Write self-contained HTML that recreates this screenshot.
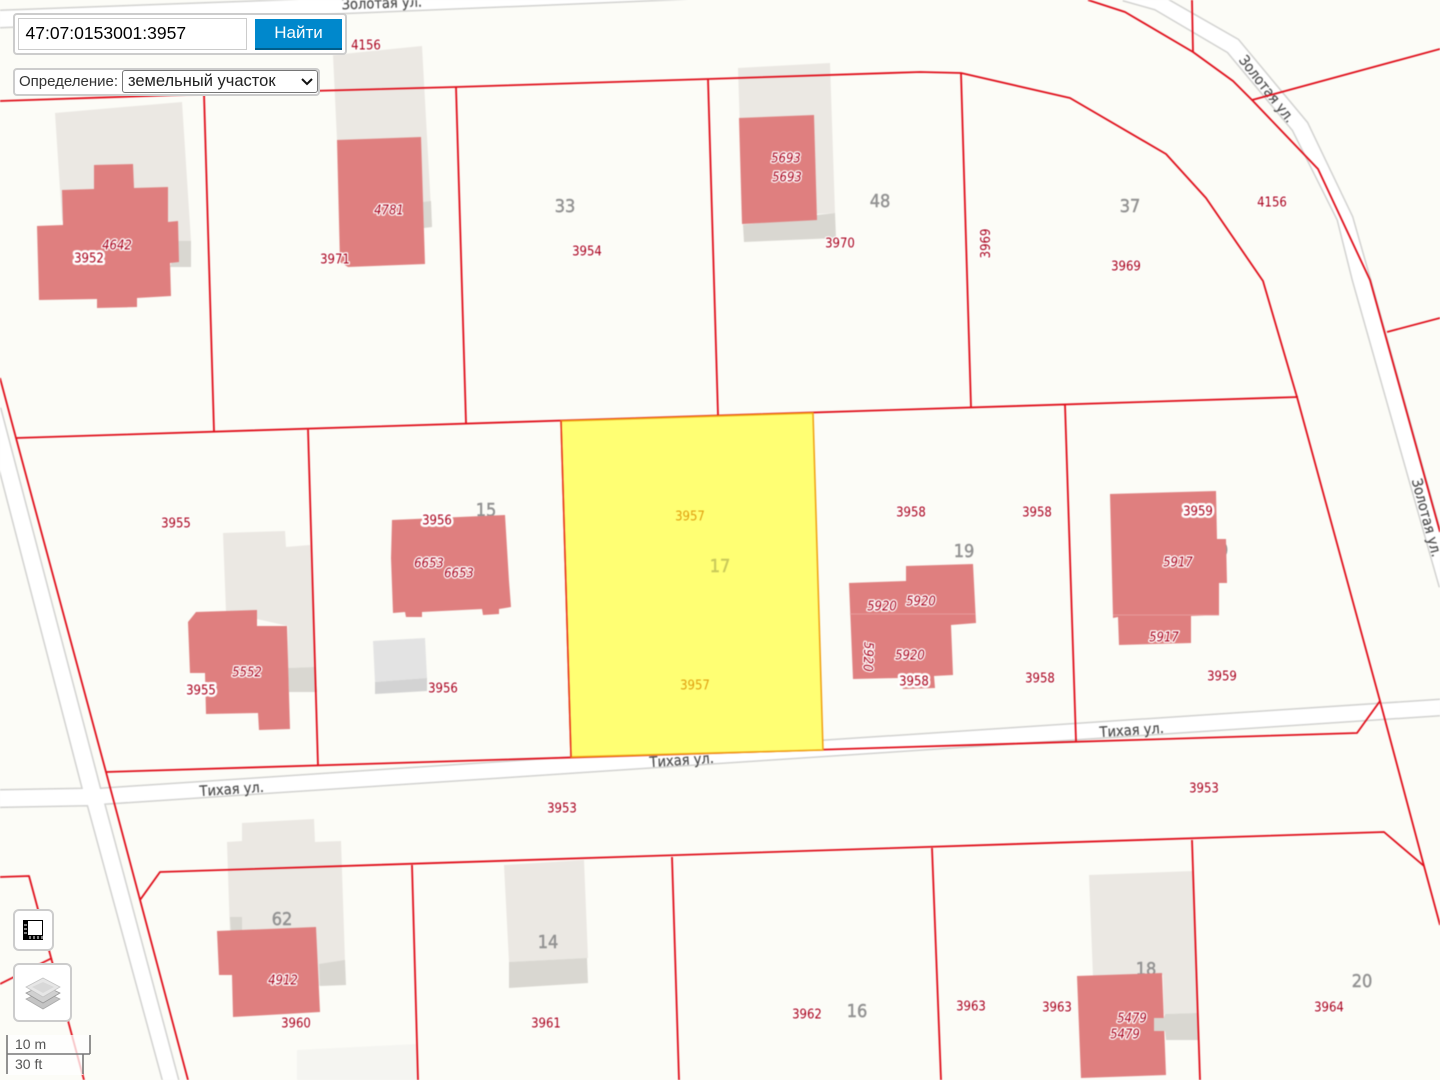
<!DOCTYPE html>
<html lang="ru"><head><meta charset="utf-8"><title>Карта</title>
<style>
html,body{margin:0;padding:0;width:1440px;height:1080px;overflow:hidden;background:#fcfcf7;font-family:"Liberation Sans",sans-serif}
svg.map{position:absolute;left:0;top:0;filter:blur(.45px)}
.ui{position:absolute;left:0;top:0;width:1440px;height:1080px;filter:blur(.3px)}
.n{font:13px "DejaVu Sans Condensed","DejaVu Sans",sans-serif;font-stretch:condensed;fill:#a8001a;text-anchor:middle;paint-order:stroke;stroke:#fff;stroke-width:2.5px;stroke-linejoin:round}
.i{font-style:italic}
.h{stroke-width:5px}
.g{font:18px "DejaVu Sans Condensed","DejaVu Sans",sans-serif;font-stretch:condensed;fill:#929292;stroke:#929292;stroke-width:.45px;text-anchor:middle}
.s{font:14.5px "DejaVu Sans Condensed","DejaVu Sans",sans-serif;font-stretch:condensed;fill:#4c4c4c;stroke:#4c4c4c;stroke-width:.2px;text-anchor:middle}
.panel{position:absolute;box-sizing:border-box;background:#fff;border:2px solid #ccc;border-radius:4px}
.inp{position:absolute;box-sizing:border-box;left:18px;top:18px;width:229px;height:32px;background:#fff;border:1px solid #ccc;font-size:17.5px;line-height:29px;padding-left:6.5px;color:#000}
.btn{position:absolute;box-sizing:border-box;left:255px;top:19px;width:87px;height:31px;background:#0088cc;border-bottom:2px solid #005e8c;color:#fff;font-size:17px;line-height:28px;text-align:center}
.lbl{position:absolute;left:19px;top:72px;font-size:15px;line-height:20px;color:#333}
.sel{position:absolute;box-sizing:border-box;left:122px;top:70px;width:196px;height:23px;background:#fff;border:1px solid #767676;border-radius:3px;font-size:16.5px;line-height:21px;padding-left:5px;color:#222}
.tb{position:absolute;box-sizing:border-box;background:#fff;border:2px solid #ccc;border-radius:6px}
.sc{position:absolute;font-size:14px;line-height:16px;color:#555}
</style></head><body>
<svg class="map" width="1440" height="1080" viewBox="0 0 1440 1080">
<rect width="1440" height="1080" fill="#fcfcf7"/>
<!-- roads -->
<g id="roads" fill="#d2d2d0" stroke="#d2d2d0" stroke-width="3">
<polygon points="0,11 300,0 700,-2 340,13 0,27"/>
<polygon points="1123,0 1155,9 1228,52 1293,130 1338,220 1353,280 1440,587 1440,532 1370,280 1352,217 1307,123 1238,40 1168,0"/>
<polygon points="0,408 100,789 1440,700 1440,715 104,803.5 178,1080 163,1080 88,805 0,806.6 0,790.5 83,789 0,470"/>
</g>
<g fill="#fff">
<polygon points="0,11 300,0 700,-2 340,13 0,27"/>
<polygon points="1123,0 1155,9 1228,52 1293,130 1338,220 1353,280 1440,587 1440,532 1370,280 1352,217 1307,123 1238,40 1168,0"/>
<polygon points="0,408 100,789 1440,700 1440,715 104,803.5 178,1080 163,1080 88,805 0,806.6 0,790.5 83,789 0,470"/>
</g>
<!-- gray buildings -->
<g fill="#ebe8e3">
<polygon points="55,113 182,102 191,241 178,241 100,270 62,220"/>
<polygon points="333,55 422,46 432,227 420,228 420,140 337,140"/>
<polygon points="738,68 830,63 835,213 817,214 743,227"/>
<polygon points="223,533 285,531 286,547 310,545 315,667 288,668 288,626 226,612"/>
<polygon points="242,823 314,819 315,842 341,841 345,961 318,987 316,930 230,935 227,842 242,841"/>
<polygon points="504,865 584,860 588,958 509,962"/>
<polygon points="1089,875 1193,871 1197,1013 1164,1014 1163,975 1093,977"/>
</g>
<g fill="#d9d7d1">
<polygon points="178,241 191,241 191,267 170,267"/>
<polygon points="423,202 431,201 432,227 424,228"/>
<polygon points="743,225 817,215 835,213 836,238 744,242"/>
<polygon points="288,668 315,667 317,692 289,692"/>
<polygon points="319,964 345,960 346,985 320,986"/>
<polygon points="230,917 242,917 242,932 231,932"/>
<polygon points="509,962 587,958 588,983 509,988"/>
</g>
<polygon points="297,1050 417,1044 418,1080 297,1080" fill="#f5f5f1"/>
<polygon points="373,641 425,638 427,678 375,682" fill="#e3e3e3"/>
<polygon points="375,682 427,678 427,691 375,694" fill="#d3d3d3"/>
<!-- gray numbers / street names -->
<g class="gg">
<text class="g" x="565" y="212">33</text>
<text class="g" x="880" y="207">48</text>
<text class="g" x="1130" y="212">37</text>
<text class="g" x="486" y="516">15</text>
<text class="g" x="964" y="557">19</text>
<text class="g" x="282" y="925">62</text>
<text class="g" x="548" y="948">14</text>
<text class="g" x="1146" y="975">18</text>
<text class="g" x="857" y="1017">16</text>
<text class="g" x="1362" y="987">20</text>
<text class="g" x="1223" y="556">0</text>
</g>
<text class="s" transform="translate(382,8) rotate(-2)">Золотая ул.</text>
<text class="s" transform="translate(232,794) rotate(-3.8)">Тихая ул.</text>
<text class="s" transform="translate(682,765) rotate(-3.8)">Тихая ул.</text>
<text class="s" transform="translate(1132,735) rotate(-3.8)">Тихая ул.</text>
<text class="s" transform="translate(1263,92) rotate(52)">Золотая ул.</text>
<text class="s" transform="translate(1422,519) rotate(75)">Золотая ул.</text>
<!-- red buildings -->
<g fill="#df7f7f">
<polygon points="94,165 133,164 134,188 168,187 168,222 178,221 179,262 170,263 171,296 137,298 137,307 97,308 97,299 39,300 37,226 63,225 62,190 94,189"/>
<polygon points="337,140 421,137 425,264 348,267 340,262"/>
<polygon points="739,118 814,115 817,220 742,224"/>
<polygon points="196,612 257,610 257,626 287,626 290,729 259,730 258,713 206,714 205,673 190,673 188,622"/>
<polygon points="392,520 505,515 509,581 511,607 499,609 499,614 483,615 482,609 422,612 422,617 406,617 405,612 393,613 391,558"/>
<polygon points="849,583 906,581 906,566 973,564 976,623 951,625 953,675 934,676 935,688 903,689 899,678 853,679"/>
<polygon points="1110,494 1216,491 1217,539 1226,539 1227,583 1219,583 1219,615 1191,616 1191,643 1119,645 1118,617 1113,618"/>
<polygon points="217,931 316,927 320,1012 233,1017 232,975 219,975"/>
<polygon points="1077,976 1162,973 1166,1075 1081,1078"/>
</g>
<polygon points="1165,1014 1197,1013 1198,1040 1166,1040 1165,1031 1154,1031 1154,1018 1164,1018" fill="#d9d7d1"/>
<path d="M850,614H975M1113,615H1219" stroke="#e89a9a" stroke-width="1" fill="none"/>
<!-- red cadastral lines -->
<g fill="none" stroke="#e0101c" stroke-width="1.8" stroke-linejoin="round">
<path d="M0,101L204,94L456,87L708,79L920,72L961,73L1070,98L1166,154L1206,198L1263,281L1297,397"/>
<path d="M204,94L214,431M456,87L466,423M708,79L718,415M961,73L971,407"/>
<path d="M16,438L1298,397M308,429L318,766M1065,405L1076,741"/>
<path d="M0,378L16,438L106,772L188,1080"/>
<path d="M106,772L1357,733L1380,701L1297,397"/>
<path d="M1380,701L1424,866L1440,925"/>
<path d="M140,900L160,872L1384,832L1424,866"/>
<path d="M412,865L418,1080M672,857L679,1080M932,848L941,1080M1192,840L1200,1080"/>
<path d="M1088,0L1125,12L1193,52L1233,81L1252,100L1318,169L1370,280L1440,532"/>
<path d="M1192,0L1193,52M1252,100L1440,49M1387,332L1440,318"/>
<path d="M0,877L29,876L84,1080M0,984L52,958"/>
</g>
<!-- selected parcel -->
<polygon points="561,421 813,413 823,750 571,757" fill="#ffff73" stroke="#f0a010" stroke-width="1.5"/>
<path d="M561,421L571,757" stroke="#e8301f" stroke-width="1.5" fill="none"/>
<text class="g" x="720" y="572" style="fill:#c9c95a;stroke:#c9c95a">17</text>
<g transform="translate(0,.5)">
<text class="n" x="690" y="520" style="fill:#e0a010;stroke:none">3957</text>
<text class="n" x="695" y="689" style="fill:#e0a010;stroke:none">3957</text>
<!-- labels -->
<text class="n" x="366" y="49">4156</text>
<text class="n h" x="89" y="262">3952</text>
<text class="n i" x="117" y="249">4642</text>
<text class="n" x="335" y="263">3971</text>
<text class="n i" x="389" y="214">4781</text>
<text class="n i" x="786" y="162">5693</text>
<text class="n i" x="787" y="181">5693</text>
<text class="n" x="587" y="255">3954</text>
<text class="n" x="840" y="247">3970</text>
<text class="n" transform="translate(990,243) rotate(-90)">3969</text>
<text class="n" x="1126" y="270">3969</text>
<text class="n" x="1272" y="206">4156</text>
<text class="n" x="176" y="527">3955</text>
<text class="n h" x="201" y="694">3955</text>
<text class="n i" x="247" y="676">5552</text>
<text class="n h" x="437" y="524">3956</text>
<text class="n i" x="429" y="567">6653</text>
<text class="n i" x="459" y="577">6653</text>
<text class="n" x="443" y="692">3956</text>
<text class="n" x="911" y="516">3958</text>
<text class="n" x="1037" y="516">3958</text>
<text class="n i" x="882" y="610">5920</text>
<text class="n i" x="921" y="605">5920</text>
<text class="n i" x="910" y="659">5920</text>
<text class="n i" transform="translate(864,656) rotate(92)">5920</text>
<text class="n h" x="914" y="685">3958</text>
<text class="n" x="1040" y="682">3958</text>
<text class="n h" x="1198" y="515">3959</text>
<text class="n i" x="1178" y="566">5917</text>
<text class="n i" x="1164" y="641">5917</text>
<text class="n" x="1222" y="680">3959</text>
<text class="n" x="562" y="812">3953</text>
<text class="n" x="1204" y="792">3953</text>
<text class="n" x="296" y="1027">3960</text>
<text class="n" x="546" y="1027">3961</text>
<text class="n" x="807" y="1018">3962</text>
<text class="n" x="971" y="1010">3963</text>
<text class="n" x="1057" y="1011">3963</text>
<text class="n" x="1329" y="1011">3964</text>
<text class="n i" x="283" y="984">4912</text>
<text class="n i" x="1132" y="1022">5479</text>
<text class="n i" x="1125" y="1038">5479</text>
</g>
</svg>

<div class="ui">
<div class="panel" style="left:13px;top:13px;width:334px;height:42px"></div>
<div class="inp">47:07:0153001:3957</div>
<div class="btn">Найти</div>
<div class="panel" style="left:13px;top:68px;width:307px;height:28px"></div>
<div class="lbl">Определение:</div>
<div class="sel">земельный участок
<svg width="14" height="9" viewBox="0 0 14 9" style="position:absolute;left:177px;top:6px"><path d="M2,2L7,7L12,2" fill="none" stroke="#111" stroke-width="2"/></svg>
</div>

<div class="tb" style="left:13px;top:909px;width:41px;height:42px">
<svg width="20" height="20" viewBox="0 0 20 20" style="position:absolute;left:8px;top:9px"><path d="M0,0H20V20H0Z" fill="#000"/><rect x="5" y="1" width="14" height="14" fill="#fff"/><path d="M1,5H4M1,9H4M1,13H4M7,19V16M11,19V16M15,19V16M19,19V16" stroke="#fff" stroke-width="1"/></svg>
</div>
<div class="tb" style="left:13px;top:963px;width:59px;height:59px">
<svg width="36" height="34" viewBox="0 0 36 34" style="position:absolute;left:10px;top:12px"><path d="M18,14L35,22L18,32L1,22Z" fill="#c4c4c4" stroke="#aaa" stroke-width=".8"/><path d="M18,8L35,16L18,26L1,16Z" fill="#d0d0d0" stroke="#999" stroke-width=".8"/><path d="M18,1L35,10L18,20L1,10Z" fill="#e6e6e6" stroke="#c4c4c4" stroke-width=".8"/><path d="M18,5L29,10L18,16L7,10Z" fill="#d8d8d8"/></svg>
</div>

<svg width="90" height="42" viewBox="0 0 90 42" style="position:absolute;left:5px;top:1034px"><rect x="2" y="1" width="83" height="20" fill="#fff" fill-opacity=".75"/><rect x="2" y="21" width="76" height="20" fill="#fff" fill-opacity=".75"/><path d="M2,1V40M85,1V20M2,20H85M78,20V40" fill="none" stroke="#777" stroke-width="1.6"/></svg>
<div class="sc" style="left:15px;top:1036px">10 m</div>
<div class="sc" style="left:15px;top:1056px">30 ft</div>
</div>
</body></html>
